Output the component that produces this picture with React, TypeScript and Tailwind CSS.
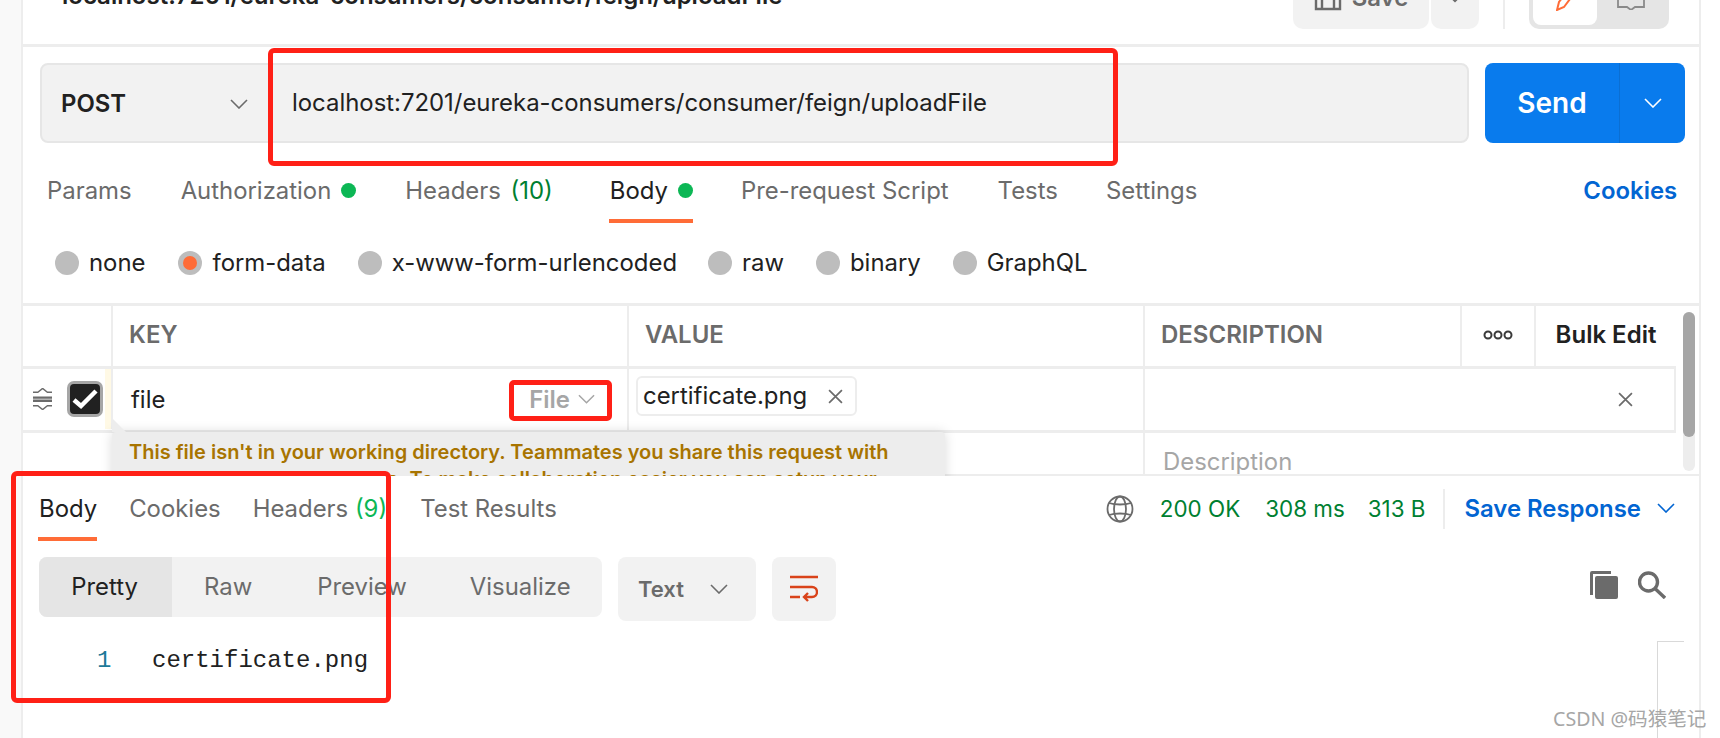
import type { ReactNode } from "react";

function Chevron({ className }: { className: string }) {
  return (
    <svg viewBox="0 0 18 10" fill="none" stroke="currentColor" strokeWidth="1.6" className={className}>
      <path d="M1 1l8 8 8-8" />
    </svg>
  );
}

function Dot() {
  return <span className="ml-[10px] h-[15px] w-[15px] rounded-full bg-[#0cb755]" />;
}

function Radio({ label, on, className }: { label: string; on?: boolean; className: string }) {
  return (
    <div className={`flex items-center ${className}`}>
      <span className="flex h-[24px] w-[24px] items-center justify-center rounded-full bg-[#bdbdbd]">
        {on && <span className="h-[14px] w-[14px] rounded-full bg-[#ff6c37]" />}
      </span>
      <span className="ml-[10px] text-[#212121]">{label}</span>
    </div>
  );
}

function HeadCell({ children, className }: { children?: ReactNode; className: string }) {
  return (
    <div className={`flex items-center border-r-2 border-[#ededed] pb-[2px] text-[24px] font-semibold text-[#6b6b6b] ${className}`}>
      {children}
    </div>
  );
}

export default function App() {
  return (
    <div className="relative flex h-[738px] w-[1720px] overflow-hidden whitespace-nowrap bg-white font-['Inter',sans-serif] text-[23.9px]">
      <div className="h-full w-[23px] border-r-2 border-[#ededed] bg-[#f9f9f9]" />

      <div className="flex h-full w-[1678px] flex-col border-r-2 border-[#ededed]">
        {/* title bar, cut off at the top of the shot */}
        <div className="flex h-[47px] shrink-0 items-start border-b-[3px] border-[#ededed]">
          <div className="ml-[39px] mt-[-22px] w-[1231px] text-[24px] font-semibold text-[#212121]">
            localhost:7201/eureka-consumers/consumer/feign/uploadFile
          </div>
          <div className="flex h-[29px] w-[136px] items-start justify-center gap-[10px] rounded-b-[10px] bg-[#f2f2f2] text-[#6b6b6b]">
            <svg viewBox="0 0 28 30" fill="none" stroke="currentColor" strokeWidth="2.4" className="mt-[-19px] h-[30px] w-[28px]">
              <path d="M2 2h19l5 5v21H2zM8 28V17h12v11M8 2v6h11V2" />
            </svg>
            <span className="mt-[-20px] font-semibold">Save</span>
          </div>
          <div className="ml-[2px] flex h-[29px] w-[48px] justify-center rounded-b-[10px] bg-[#f2f2f2] text-[#6b6b6b]">
            <Chevron className="mt-[-7px] h-[10px] w-[16px]" />
          </div>
          <div className="ml-[24px] h-[29px] w-[2px] bg-[#ededed]" />
          <div className="ml-[24px] flex h-[29px] w-[140px] rounded-b-[10px] bg-[#e5e5e5] px-[4px]">
            <div className="flex h-[25px] w-[64px] items-start justify-center rounded-b-[8px] bg-white text-[#ff6c37]">
              <svg viewBox="0 0 18 20" fill="none" stroke="currentColor" strokeWidth="2" className="mt-[-9px] h-[20px] w-[18px]">
                <path d="M13 -2L3 11 1 19l7-3L17 4" />
              </svg>
            </div>
            <div className="flex h-[25px] w-[68px] items-start justify-center text-[#8a8a8a]">
              <svg viewBox="0 0 28 14" fill="none" stroke="currentColor" strokeWidth="1.8" className="mt-[-4px] h-[14px] w-[28px]">
                <path d="M1 -6v17h9l4 3 4-3h9V-6" />
              </svg>
            </div>
          </div>
        </div>

        {/* url row */}
        <div className="ml-[17px] mt-[16px] flex h-[80px] shrink-0">
          <div className="flex w-[1429px] rounded-[8px] border-2 border-[#e6e6e6] bg-[#f2f2f2]">
            <div className="flex w-[250px] items-center pl-[19px] pt-[2px] font-semibold text-[#212121]">
              POST
              <Chevron className="ml-[104px] h-[10px] w-[18px] text-[#6b6b6b]" />
            </div>
            <div className="flex items-center text-[#212121]">localhost:7201/eureka-consumers/consumer/feign/uploadFile</div>
          </div>
          <div className="ml-[16px] flex w-[200px] rounded-[8px] bg-[#097bed] text-white">
            <div className="flex w-[135px] items-center justify-center border-r border-[#0a6fd4] text-[28px] font-semibold">Send</div>
            <div className="flex flex-1 items-center justify-center">
              <Chevron className="h-[10px] w-[18px]" />
            </div>
          </div>
        </div>

        {/* request tabs */}
        <div className="flex h-[80px] shrink-0 items-start pt-[30px] text-[#6b6b6b]">
          <span className="ml-[24px]">Params</span>
          <div className="ml-[49px] flex items-center">
            Authorization
            <Dot />
          </div>
          <span className="ml-[49px]">
            Headers <span className="ml-[3px] text-[#007f31]">(10)</span>
          </span>
          <div className="relative ml-[57px] flex items-center text-[#212121]">
            Body
            <Dot />
            <span className="absolute left-[-1px] right-0 top-[46px] h-[4px] bg-[#ff6c37]" />
          </div>
          <span className="ml-[48px]">Pre-request Script</span>
          <span className="ml-[49px]">Tests</span>
          <span className="ml-[48px]">Settings</span>
          <span className="ml-[386px] font-semibold text-[#0265d2]">Cookies</span>
        </div>

        {/* body type radios */}
        <div className="flex h-[80px] shrink-0 items-start pt-[22px]">
          <Radio label="none" className="ml-[32px]" />
          <Radio label="form-data" on className="ml-[33px]" />
          <Radio label="x-www-form-urlencoded" className="ml-[32px]" />
          <Radio label="raw" className="ml-[31px]" />
          <Radio label="binary" className="ml-[32px]" />
          <Radio label="GraphQL" className="ml-[32px]" />
        </div>

        {/* params table, the tooltip is cut off by the response pane */}
        <div className="relative flex h-[173px] shrink-0 overflow-hidden border-t-[3px] border-[#ededed]">
          <div className="w-[1653px]">
            <div className="flex h-[63px] border-b-[3px] border-[#ededed]">
              <HeadCell className="w-[90px]" />
              <HeadCell className="w-[516px] pl-[16px]">KEY</HeadCell>
              <HeadCell className="w-[516px] pl-[16px]">VALUE</HeadCell>
              <HeadCell className="w-[317px] pl-[16px]">DESCRIPTION</HeadCell>
              <HeadCell className="w-[74px] justify-center">
                <svg viewBox="0 0 30 10" fill="none" stroke="#3a3a3a" strokeWidth="2" className="h-[10px] w-[30px]">
                  <circle cx="5" cy="5" r="3.5" />
                  <circle cx="15" cy="5" r="3.5" />
                  <circle cx="25" cy="5" r="3.5" />
                </svg>
              </HeadCell>
              <div className="flex w-[140px] items-center justify-center pb-[2px] text-[24px] font-semibold text-[#212121]">Bulk Edit</div>
            </div>

            <div className="flex h-[64px] border-b-[3px] border-r-2 border-[#ededed]">
              <div className="flex h-[60px] w-[90px] items-center border-r-2 border-[#ededed]">
                <svg viewBox="0 0 20 22" fill="none" stroke="#6b6b6b" className="ml-[10px] h-[22px] w-[20px]">
                  <path strokeWidth="1.5" d="M0 4h5l5-4 5 4h5M0 18h5l5 4 5-4h5" />
                  <path strokeWidth="2.4" d="M0 9.5h20M0 12.8h20" />
                </svg>
                <span className="ml-[15px] flex h-[36px] w-[36px] items-center justify-center rounded-[7px] border-[3px] border-[#a6a6a6] bg-[#212121]">
                  <svg viewBox="0 0 30 30" fill="none" stroke="white" strokeWidth="4.5" className="h-[30px] w-[30px]">
                    <path d="M4 16l7 6L26 7" />
                  </svg>
                </span>
                <span className="ml-[2px] h-full w-[6px] bg-[#fff9e5]" />
              </div>
              <div className="flex w-[516px] items-center justify-between border-r-2 border-[#ededed] pl-[18px] pr-[32px] text-[#212121]">
                file
                <span className="flex items-center font-semibold text-[#a6a6a6]">
                  File
                  <Chevron className="ml-[8px] h-[10px] w-[17px]" />
                </span>
              </div>
              <div className="flex w-[516px] items-start border-r-2 border-[#ededed] pl-[7px] pt-[7px]">
                <span className="flex h-[40px] w-[221px] items-center rounded-[6px] border-2 border-[#ededed] pl-[5px] text-[#212121]">
                  certificate.png
                  <svg viewBox="0 0 14 14" stroke="#6b6b6b" strokeWidth="1.6" className="ml-[21px] h-[15px] w-[15px]">
                    <path d="M1 1l12 12M13 1L1 13" />
                  </svg>
                </span>
              </div>
              <div className="flex flex-1 items-center justify-end pr-[41px]">
                <svg viewBox="0 0 14 14" stroke="#6b6b6b" strokeWidth="1.6" className="h-[15px] w-[15px]">
                  <path d="M1 1l12 12M13 1L1 13" />
                </svg>
              </div>
            </div>

            <div className="flex h-[43px]">
              <div className="w-[606px] border-r-2 border-[#ededed]" />
              <div className="w-[516px] border-r-2 border-[#ededed]" />
              <div className="pl-[18px] pt-[11px] leading-[36px] text-[#a6a6a6]">Description</div>
            </div>
          </div>
          <div className="ml-[7px] mt-[6px] h-[159px] w-[12px] rounded-full bg-[#ededed]">
            <div className="h-[125px] rounded-full bg-[#a6a6a6]" />
          </div>

          <div className="absolute bottom-0 left-0 right-0 h-[2px] bg-[#ededed]" />
          <div className="absolute left-[89px] top-[126px] w-[833px] rounded-[4px] bg-[#ededed] pl-[17px] pt-[7px] text-[20px] font-semibold leading-[27px] text-[#a87400] shadow-[0_0_12px_rgba(0,0,0,0.15)]">
            This file isn't in your working directory. Teammates you share this request with
            <br />
            won't be able to use this file. To make collaboration easier you can setup your
            <span className="absolute left-0 top-[-14px] h-0 w-0 border-b-[14px] border-r-[14px] border-b-[#ededed] border-r-transparent" />
          </div>
        </div>

        {/* response pane */}
        <div className="flex h-[62px] shrink-0 items-start pt-[15px] text-[#6b6b6b]">
          <div className="relative ml-[16px] text-[#212121]">
            Body
            <span className="absolute left-[-1px] right-0 top-[46px] h-[4px] bg-[#ff6c37]" />
          </div>
          <span className="ml-[32px]">Cookies</span>
          <span className="ml-[32px]">
            Headers <span className="text-[#0cb755]">(9)</span>
          </span>
          <span className="ml-[33px]">Test Results</span>
          <svg viewBox="0 0 28 28" fill="none" stroke="#6b6b6b" strokeWidth="1.8" className="ml-[549px] mt-[4px] h-[28px] w-[28px] shrink-0">
            <circle cx="14" cy="14" r="12.5" />
            <ellipse cx="14" cy="14" rx="6" ry="12.5" />
            <path d="M3 8c6 2 16 2 22 0M3 20c6-2 16-2 22 0" />
          </svg>
          <span className="ml-[26px] text-[22.4px] leading-[36px] text-[#007f31]">200 OK</span>
          <span className="ml-[25px] text-[22.4px] leading-[36px] text-[#007f31]">308 ms</span>
          <span className="ml-[23px] text-[22.4px] leading-[36px] text-[#007f31]">313 B</span>
          <span className="ml-[18px] mt-[-2px] h-[40px] w-[2px] bg-[#ededed]" />
          <span className="ml-[19px] font-semibold text-[#0265d2]">Save Response</span>
          <Chevron className="ml-[16px] mt-[12px] h-[10px] w-[18px] text-[#0265d2]" />
        </div>

        <div className="ml-[16px] mt-[19px] flex shrink-0 items-start">
          <div className="flex h-[60px] w-[563px] items-center overflow-hidden rounded-[8px] bg-[#f2f2f2] text-[#6b6b6b]">
            <div className="flex h-full w-[133px] items-center justify-center bg-[#e5e5e5] pr-[2px] text-[#212121]">Pretty</div>
            <span className="ml-[32px]">Raw</span>
            <span className="ml-[65px]">Preview</span>
            <span className="ml-[63px]">Visualize</span>
          </div>
          <div className="ml-[16px] flex h-[64px] w-[138px] items-center rounded-[8px] bg-[#f2f2f2] pl-[20px] text-[22px] font-semibold text-[#6b6b6b]">
            Text
            <Chevron className="ml-[26px] h-[10px] w-[18px]" />
          </div>
          <div className="ml-[16px] flex h-[64px] w-[64px] items-center justify-center rounded-[8px] bg-[#f2f2f2]">
            <svg viewBox="0 0 28 28" fill="none" stroke="#d9431a" strokeWidth="2.4" className="h-[28px] w-[28px]">
              <path d="M0 2h28M0 12h22a5 5 0 0 1 0 10h-8M18 18l-4 4 4 4M0 22h10" />
            </svg>
          </div>
          <div className="ml-auto mr-[33px] mt-[14px] flex gap-[20px] text-[#6b6b6b]">
            <svg viewBox="0 0 28 28" fill="currentColor" className="h-[28px] w-[28px]">
              <path d="M0 2a2 2 0 0 1 2-2h19v3H3v21H0zM5 7a2 2 0 0 1 2-2h19a2 2 0 0 1 2 2v19a2 2 0 0 1-2 2H7a2 2 0 0 1-2-2z" />
            </svg>
            <svg viewBox="0 0 28 28" fill="none" stroke="currentColor" strokeWidth="3.4" className="h-[28px] w-[28px]">
              <circle cx="10.5" cy="11" r="9" />
              <path d="M17 17.5l10 9.5" />
            </svg>
          </div>
        </div>

        <div className="flex flex-1 items-start text-[#212121]">
          <span className="ml-[74px] mt-[26px] w-[15px] font-['Liberation_Mono',monospace] text-[24px] leading-[28px] text-[#1d7a99]">1</span>
          <span className="ml-[40px] mt-[26px] font-['Liberation_Mono',monospace] text-[24px] leading-[28px]">certificate.png</span>
          <div className="ml-auto mr-[15px] mt-[20px] h-full w-[27px] border-l border-t border-[#d9d9d9]" />
        </div>
      </div>

      {/* red marks drawn over the shot */}
      <div className="absolute left-[268px] top-[48px] h-[118px] w-[850px] rounded-[6px] border-[5px] border-[#ff2016]" />
      <div className="absolute left-[509px] top-[380px] h-[41px] w-[103px] rounded-[5px] border-[5px] border-[#ff2016]" />
      <div className="absolute left-[11px] top-[471px] h-[232px] w-[380px] rounded-[6px] border-[5px] border-[#ff2016]" />

      <div className="absolute left-[1553px] top-[704px] font-['Noto_Sans','Noto_Sans_CJK_SC',sans-serif] text-[19.6px] text-[#a6a6a6]">
        CSDN @码猿笔记
      </div>
    </div>
  );
}
